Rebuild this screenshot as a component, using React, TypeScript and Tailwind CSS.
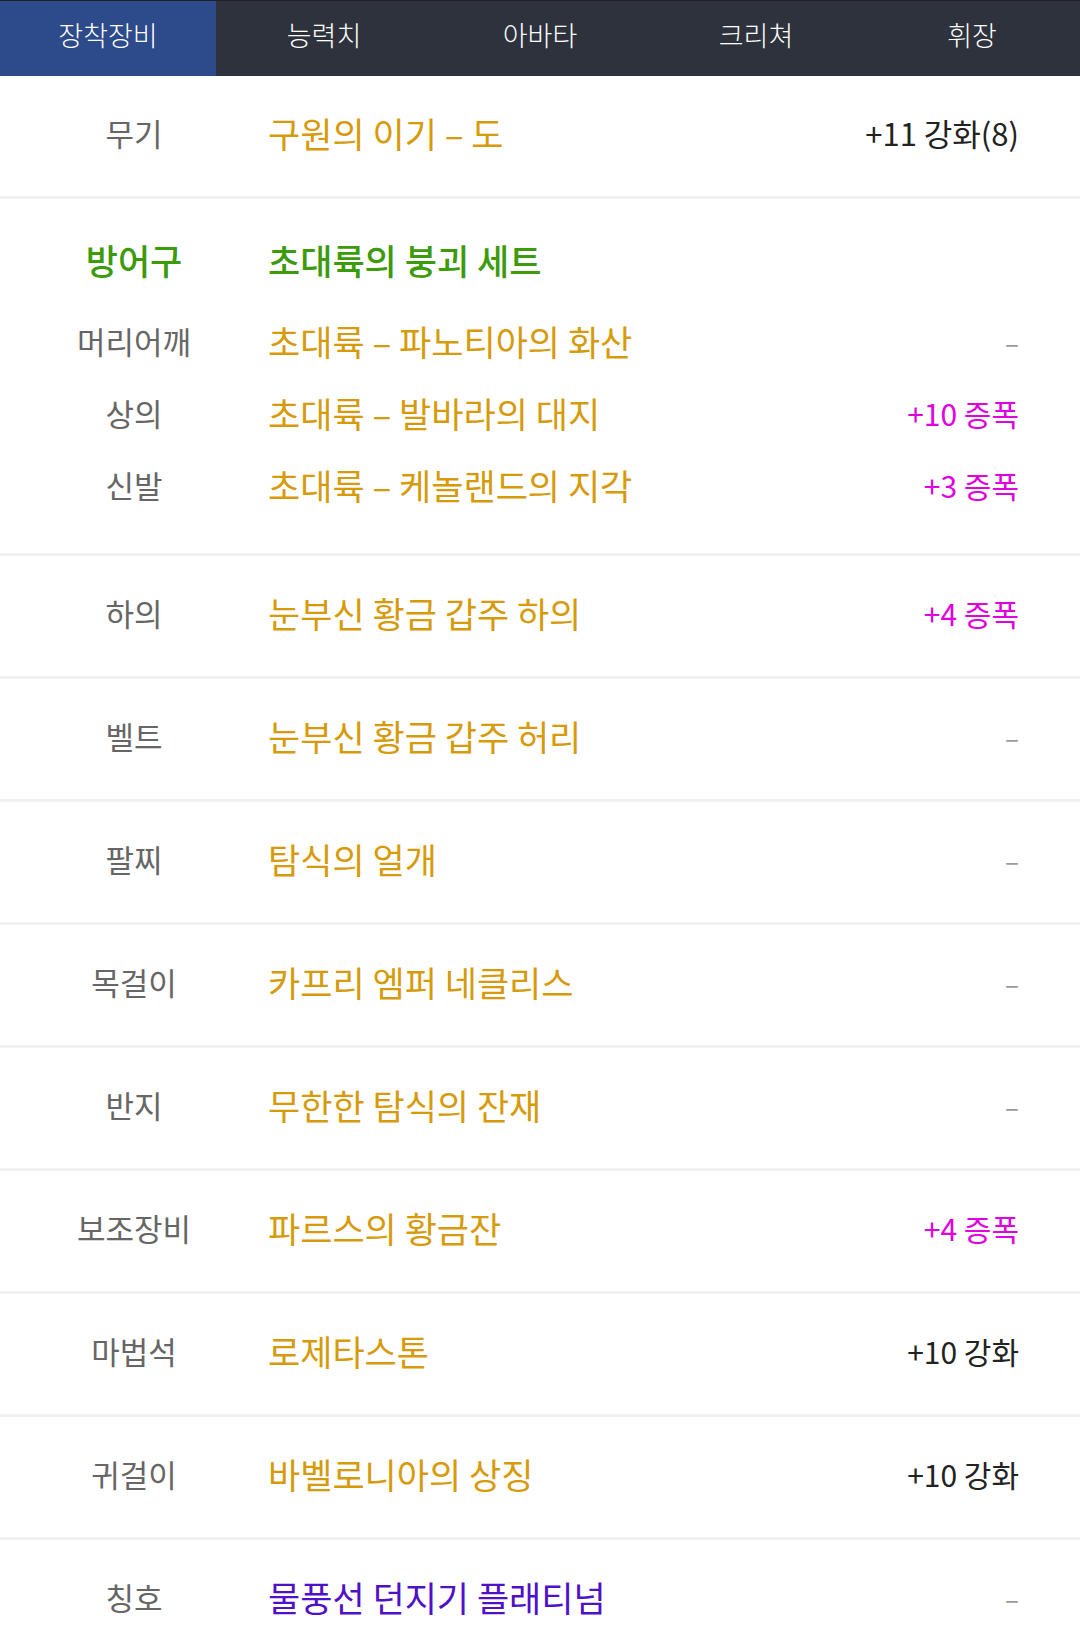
import React from 'react';

type Item = {
  label: string;
  name: string;
  value: string;
  nameColor?: string;
  valueColor?: string;
};

const tabs = ['장착장비', '능력치', '아바타', '크리쳐', '휘장'];

const armor: Item[] = [
  { label: '머리어깨', name: '초대륙 – 파노티아의 화산', value: '-' },
  { label: '상의', name: '초대륙 – 발바라의 대지', value: '+10 증폭', valueColor: 'text-[#e000e0]' },
  { label: '신발', name: '초대륙 – 케놀랜드의 지각', value: '+3 증폭', valueColor: 'text-[#e000e0]' },
];

const rest: Item[] = [
  { label: '하의', name: '눈부신 황금 갑주 하의', value: '+4 증폭', valueColor: 'text-[#e000e0]' },
  { label: '벨트', name: '눈부신 황금 갑주 허리', value: '-' },
  { label: '팔찌', name: '탐식의 얼개', value: '-' },
  { label: '목걸이', name: '카프리 엠퍼 네클리스', value: '-' },
  { label: '반지', name: '무한한 탐식의 잔재', value: '-' },
  { label: '보조장비', name: '파르스의 황금잔', value: '+4 증폭', valueColor: 'text-[#e000e0]' },
  { label: '마법석', name: '로제타스톤', value: '+10 강화' },
  { label: '귀걸이', name: '바벨로니아의 상징', value: '+10 강화' },
  { label: '칭호', name: '물풍선 던지기 플래티넘', value: '-', nameColor: 'text-[#5010c8]' },
];

function Value({ value, color }: { value: string; color?: string }) {
  if (value === '-') {
    return <span className="text-[26px] text-[#999999]">–</span>;
  }
  return <span className={`text-[30px] ${color ?? 'text-[#222222]'}`}>{value}</span>;
}

function Row({ item, height }: { item: Item; height: string }) {
  return (
    <div className={`flex items-center ${height}`}>
      <div className="w-[268px] text-center text-[31px] text-[#666666]">{item.label}</div>
      <div className={`flex-1 text-[35px] ${item.nameColor ?? 'text-[#d69a0a]'}`}>{item.name}</div>
      <div className="pr-[61px]">
        <Value value={item.value} color={item.valueColor} />
      </div>
    </div>
  );
}

export default function App() {
  return (
    <div
      className="w-[1080px] h-[1648px] overflow-hidden bg-white"
      style={{ fontFamily: '"Noto Sans CJK KR", "Noto Sans", sans-serif' }}
    >
      {/* tabs */}
      <div className="border-t border-[#1e2026] bg-[#2e323d] grid grid-cols-5 h-[76px]">
        {tabs.map((t, i) => (
          <div
            key={t}
            className={`flex items-center justify-center pb-[7px] text-[27px] font-light text-white ${
              i === 0 ? 'bg-[#2d4a8b]' : ''
            }`}
          >
            {t}
          </div>
        ))}
      </div>

      {/* weapon */}
      <div className="flex items-center h-[120px] pb-[6px]">
        <div className="w-[268px] text-center text-[31px] text-[#666666]">무기</div>
        <div className="flex-1 text-[35px] text-[#d69a0a]">구원의 이기 – 도</div>
        <div className="pr-[61px]">
          <span className="text-[31px] text-[#222222]">+11 강화(8)</span>
        </div>
      </div>

      {/* armor set */}
      <div className="border-t-[3px] border-[#f1f1f1] pt-[25px] pb-[32px]">
        <div className="flex items-center h-[72px]">
          <div className="w-[268px] text-center text-[35px] font-medium text-[#3c9b0a]">방어구</div>
          <div className="flex-1 text-[35px] font-medium text-[#3c9b0a]">초대륙의 붕괴 세트</div>
        </div>
        <div className="mt-[9px]">
          {armor.map((it) => (
            <Row key={it.label} item={it} height="h-[72px]" />
          ))}
        </div>
      </div>

      {rest.map((it) => (
        <div key={it.label} className="border-t-[3px] border-[#f1f1f1]">
          <Row item={it} height="h-[120px] pb-[6px]" />
        </div>
      ))}
    </div>
  );
}
